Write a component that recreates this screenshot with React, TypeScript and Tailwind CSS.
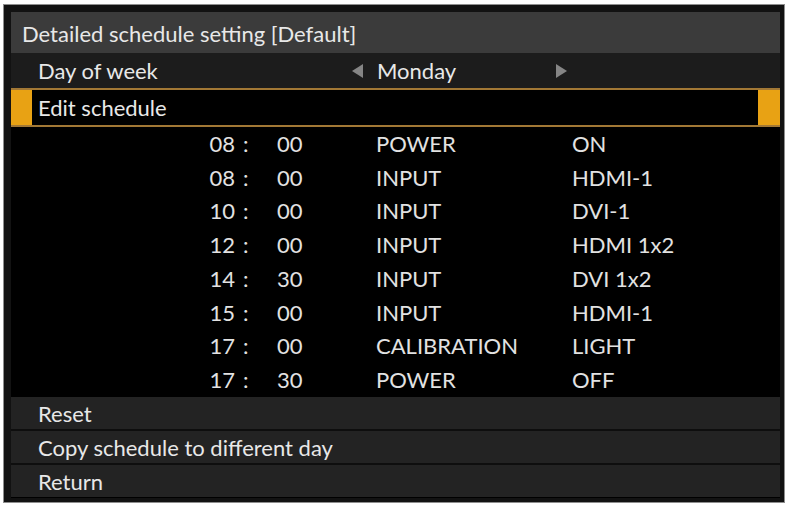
const schedule = [
  { h: '08', m: '00', cmd: 'POWER', val: 'ON' },
  { h: '08', m: '00', cmd: 'INPUT', val: 'HDMI-1' },
  { h: '10', m: '00', cmd: 'INPUT', val: 'DVI-1' },
  { h: '12', m: '00', cmd: 'INPUT', val: 'HDMI 1x2' },
  { h: '14', m: '30', cmd: 'INPUT', val: 'DVI 1x2' },
  { h: '15', m: '00', cmd: 'INPUT', val: 'HDMI-1' },
  { h: '17', m: '00', cmd: 'CALIBRATION', val: 'LIGHT' },
  { h: '17', m: '30', cmd: 'POWER', val: 'OFF' },
]

function Arrow({ dir }: { dir: 'left' | 'right' }) {
  return (
    <svg width="11" height="14" viewBox="0 0 11 14" className="shrink-0">
      {dir === 'left'
        ? <polygon points="11,0 11,14 0,7" fill="#858585" />
        : <polygon points="0,0 0,14 11,7" fill="#858585" />}
    </svg>
  )
}

function MenuRow({ label }: { label: string }) {
  return (
    <div className="flex h-[32px] items-center bg-[#232323] pl-[27px] pt-[1px]">{label}</div>
  )
}

export default function App() {
  return (
    <div
      className="h-[506px] w-[787px] bg-white pl-[3px] pt-[4px] text-[22px] leading-none text-[#e8e8e8]"
      style={{ fontFamily: 'Lato, "DejaVu Sans", sans-serif' }}
    >
      <div className="flex h-[499px] w-[782px] flex-col border border-[#8e8e8e] bg-[#121212] pb-[4px] pl-[7px] pr-[4px] pt-[7px]">
        <div className="flex w-[769px] flex-1 flex-col bg-black">
          {/* title */}
          <div className="flex h-[41px] items-center bg-[#3b3b3b] pl-[11px] pt-[2px]">
            Detailed schedule setting [Default]
          </div>

          {/* day selector */}
          <div className="flex h-[35px] items-center bg-[#1c1c1c]">
            <span className="w-[341px] pl-[27px]">Day of week</span>
            <Arrow dir="left" />
            <span className="w-[193px] pl-[14px]">Monday</span>
            <Arrow dir="right" />
          </div>

          {/* selected row */}
          <div className="flex h-[39px] items-stretch border-y-2 border-[#a27835] bg-black">
            <div className="w-[21px] bg-[#e8a214]" />
            <div className="flex flex-1 items-center pl-[6px]">Edit schedule</div>
            <div className="w-[22px] bg-[#e8a214]" />
          </div>

          {/* schedule entries */}
          <div className="flex flex-col text-[#e2e2e2]">
            {schedule.map((r, i) => (
              <div key={i} className="flex h-[33.75px] items-center">
                <span className="w-[224px] text-right">{r.h}</span>
                <span className="w-[42px] pl-[8px]">:</span>
                <span className="w-[99px]">{r.m}</span>
                <span className="w-[196px]">{r.cmd}</span>
                <span>{r.val}</span>
              </div>
            ))}
          </div>

          {/* actions */}
          <div className="flex flex-col gap-[2px] bg-[#0e0e0e]">
            <MenuRow label="Reset" />
            <MenuRow label="Copy schedule to different day" />
            <MenuRow label="Return" />
          </div>
        </div>
      </div>
    </div>
  )
}
